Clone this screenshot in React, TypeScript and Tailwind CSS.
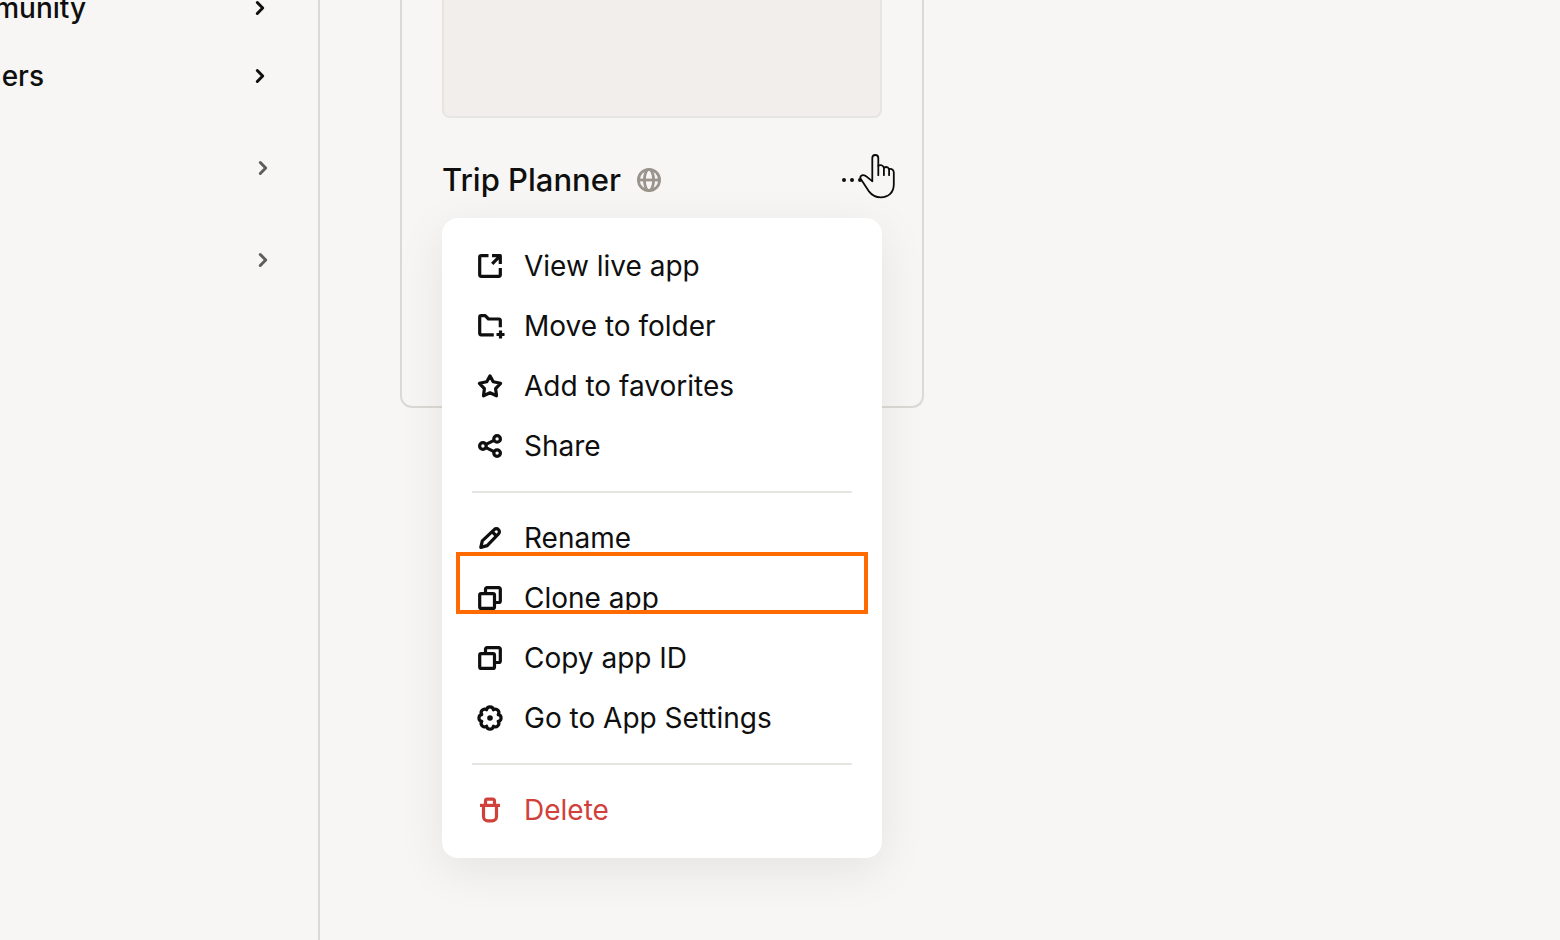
import type { ReactNode } from "react";

const icons: Record<string, ReactNode> = {
  external: (
    <>
      <path d="M16.5 7.7H9.2a1.5 1.5 0 0 0-1.5 1.5v17.6a1.5 1.5 0 0 0 1.5 1.5h17.6a1.5 1.5 0 0 0 1.5-1.5V20" />
      <path d="m20.2 15.8 7.6-7.6M20 7.7h8.3V16" />
    </>
  ),
  folder: (
    <>
      <path d="M21.8 26.8H9.2a1.5 1.5 0 0 1-1.5-1.5V9.2a1.5 1.5 0 0 1 1.5-1.5h4L16.5 11h10.3a1.5 1.5 0 0 1 1.5 1.5v6.8" />
      <path d="M28.5 22.5v8M24.5 26.5h8" />
    </>
  ),
  star: (
    <path d="m18 7.8 3.2 6 7.4 1.5-5 5.3.9 7.2-6.5-3-6.5 3 .9-7.2-5-5.3 7.4-1.5z" />
  ),
  share: (
    <>
      <circle cx="10.9" cy="18" r="3.3" />
      <circle cx="25.1" cy="10.9" r="3.3" />
      <circle cx="25.1" cy="25.1" r="3.3" />
      <path d="m14 16.4 8-4M14 19.6l8 4" />
    </>
  ),
  pencil: (
    <>
      <path d="m8.8 27.4 1.5-6.6L22.2 9.6a3 3 0 0 1 4.3 0 3 3 0 0 1 0 4.3L15.2 25.6z" />
      <path d="m20.5 12 3.8 3.8" />
    </>
  ),
  copy: (
    <>
      <rect x="7.7" y="13.6" width="14.8" height="14.8" rx="1.5" />
      <path d="M13.5 13V9.1A1.5 1.5 0 0 1 15 7.6h11.8a1.5 1.5 0 0 1 1.5 1.5V21a1.5 1.5 0 0 1-1.5 1.5H23" />
    </>
  ),
  gear: (
    <>
      <path d="M26.2 14.6a3.45 3.45 0 0 1 0 6.8 3.45 3.45 0 0 1-4.8 4.8 3.45 3.45 0 0 1-6.8 0 3.45 3.45 0 0 1-4.8-4.8 3.45 3.45 0 0 1 0-6.8 3.45 3.45 0 0 1 4.8-4.8 3.45 3.45 0 0 1 6.8 0 3.45 3.45 0 0 1 4.8 4.8z" />
      <circle cx="18" cy="18" r="2.8" fill="currentColor" stroke="none" />
    </>
  ),
  trash: (
    <>
      <path d="M8 13.4h20" />
      <path d="M13.5 13V9a1.8 1.8 0 0 1 1.8-1.8h5.4A1.8 1.8 0 0 1 22.5 9v4" />
      <path d="M11.5 13.5v11a4.3 4.3 0 0 0 4.3 4.3h4.4a4.3 4.3 0 0 0 4.3-4.3v-11" />
    </>
  ),
};

const groups = [
  [
    { icon: "external", label: "View live app" },
    { icon: "folder", label: "Move to folder" },
    { icon: "star", label: "Add to favorites" },
    { icon: "share", label: "Share" },
  ],
  [
    { icon: "pencil", label: "Rename" },
    { icon: "copy", label: "Clone app" },
    { icon: "copy", label: "Copy app ID" },
    { icon: "gear", label: "Go to App Settings" },
  ],
  [{ icon: "trash", label: "Delete", danger: true }],
];

function Chevron() {
  return (
    <svg viewBox="0 0 16 16" fill="none" stroke="currentColor" strokeWidth="3" strokeLinejoin="round" strokeLinecap="round" className="h-4 w-4 shrink-0" aria-hidden="true">
      <path d="m5.3 2.5 5.4 5.5-5.4 5.5" />
    </svg>
  );
}

function MenuItem({ icon, label, danger }: { icon: string; label: string; danger?: boolean }) {
  return (
    <button
      type="button"
      role="menuitem"
      className={`flex h-[60px] w-full items-center gap-4 px-[30px] text-left text-[28px] leading-9 ${danger ? "text-[#d0413c]" : "text-[#0f0f0f]"}`}
    >
      <svg viewBox="0 0 36 36" fill="none" stroke="currentColor" strokeWidth="3.2" strokeLinejoin="round" className="h-9 w-9 shrink-0" aria-hidden="true">
        {icons[icon]}
      </svg>
      {label}
    </button>
  );
}

function Sidebar() {
  return (
    <nav className="w-80 shrink-0 overflow-hidden border-r-2 border-[#dad9d3] text-[28px] leading-9 font-medium">
      {/* Scrolled list, the first row starts above the viewport */}
      <div className="-mt-[26px] flex flex-col">
        <button type="button" className="flex h-[68px] items-center justify-between pr-[50px]">
          <span className="flex w-[86px] justify-end">munity</span>
          <Chevron />
        </button>
        <button type="button" className="flex h-[68px] items-center justify-between pr-[50px]">
          <span className="flex w-11 justify-end">ners</span>
          <Chevron />
        </button>
        <div className="mt-3 flex flex-col text-[#5f5e5b]">
          <button type="button" aria-label="Expand" className="flex h-[92px] items-center justify-end pr-[47px]">
            <Chevron />
          </button>
          <button type="button" aria-label="Expand" className="flex h-[92px] items-center justify-end pr-[47px]">
            <Chevron />
          </button>
        </div>
      </div>
    </nav>
  );
}

function Menu() {
  return (
    <div
      role="menu"
      className="absolute inset-x-10 top-[218px] rounded-2xl bg-white py-[18px] shadow-[0_12px_48px_rgba(0,0,0,0.08)]"
    >
      {groups.map((items, i) => (
        <div key={i}>
          {i > 0 && <hr className="mx-[30px] my-[15px] border-t-2 border-[#e7e5e2]" />}
          {items.map((item) => (
            <MenuItem key={item.label} {...item} />
          ))}
        </div>
      ))}
      {/* Highlight */}
      <div className="pointer-events-none absolute inset-x-[14px] top-[334px] h-[62px] border-4 border-[#ff6b00]" />
    </div>
  );
}

export default function App() {
  return (
    <div className="flex h-screen overflow-hidden bg-[#f7f6f4] font-['Inter',sans-serif] text-[#0f0f0f]">
      <Sidebar />
      <main className="flex-1 px-20">
        <article className="relative h-[408px] w-full max-w-[524px] rounded-b-xl border-x-2 border-b-2 border-[#dad9d3] px-10">
          <div className="h-[118px] rounded-b-lg border-x-2 border-b-2 border-[#e7e5e2] bg-[#f2eeeb]" />
          <header className="mt-10 flex h-11 items-center gap-4">
            <h2 className="text-[31px] leading-10 font-medium">Trip Planner</h2>
            <svg viewBox="0 0 24 24" fill="none" stroke="#9a948d" strokeWidth="2.8" className="h-6 w-6" aria-label="Public">
              <circle cx="12" cy="12" r="10.6" />
              <path d="M1.5 12h21" />
              <ellipse cx="12" cy="12" rx="4.6" ry="10.6" />
            </svg>
            <button type="button" aria-label="More actions" className="ml-auto">
              <svg viewBox="0 0 40 24" fill="currentColor" className="h-6 w-10">
                <circle cx="2" cy="12" r="2" />
                <circle cx="10" cy="12" r="2" />
                <circle cx="18" cy="12" r="2" />
              </svg>
            </button>
          </header>
          <Menu />
          {/* Pointer */}
          <svg viewBox="0 0 38 46" fill="#f7f6f4" stroke="#0b0b0b" strokeWidth="1.8" strokeLinejoin="round" strokeLinecap="round" className="pointer-events-none absolute top-[153px] right-[26px] h-[46px] w-[38px]" aria-hidden="true">
            <path d="M14.3 28.3V5a3 3 0 0 1 6 0v7.6c2.1-1 4.6-.6 5.6 2 2.1-.9 4.3-.5 5.2 1.5 2.4-.7 4.7.4 4.7 3.3v12.1c0 8-5.3 12.8-13 12.8-5.3 0-9-2.2-12.1-6.2L2.8 26c-1.5-2.6 1-4.7 3.7-3.6 2.7 1 4.8 3.8 7.8 5.9z" />
            <path d="M20.3 12.6v9.6M25.9 14.6v7.6M31.1 16.1v6.1" fill="none" />
          </svg>
        </article>
      </main>
    </div>
  );
}
